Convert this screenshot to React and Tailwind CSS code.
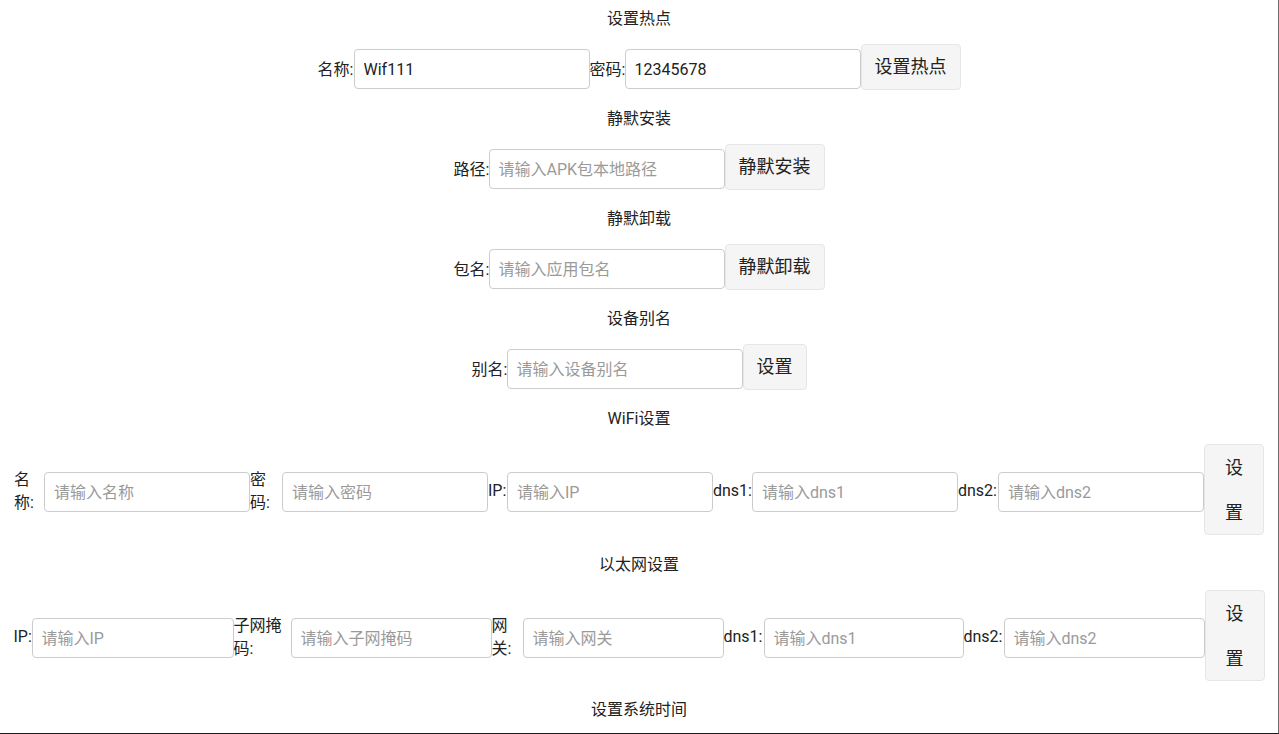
import React from "react";

const inputCls =
    "h-[40px] border border-[#cccccc] rounded-[4px] pl-[9px] pr-2 text-[16px] text-[#222] placeholder:text-[#9a9a9a] outline-none bg-white";

function Title({ children }) {
    return (
        <p className="text-[16px] leading-[23px] text-[#222] text-center">
            {children}
        </p>
    );
}

function Field({ label, labelW, inputW, placeholder, value }) {
    return (
        <div className="flex items-center mb-[1px] shrink-0">
            <span
                className={`${labelW} shrink-0 whitespace-nowrap text-[16px] leading-[23px] text-[#222]`}
            >
                {label}
            </span>
            <input
                className={`${inputCls} ${inputW} shrink-0`}
                placeholder={placeholder}
                defaultValue={value}
            />
        </div>
    );
}

function Btn({ children, w }) {
    return (
        <button
            className={`${w} shrink-0 h-[46px] leading-[44px] text-[18px] text-[#222] bg-[#f5f5f5] border border-[#e6e6e6] rounded-[4px] text-center whitespace-nowrap`}
        >
            {children}
        </button>
    );
}

function SimpleSection({ title, children }) {
    return (
        <div className="pt-[7px] pb-[10px] flex flex-col items-center">
            <Title>{title}</Title>
            <div className="mt-[14px] flex items-end justify-center">
                {children}
            </div>
        </div>
    );
}

function WideField({ label, labelW, inputW, placeholder }) {
    return (
        <>
            <span
                className={`${labelW} shrink-0 text-[16px] leading-[23px] text-[#222] mt-[2px]`}
            >
                {label}
            </span>
            <input
                className={`${inputCls} ${inputW} shrink-0 mt-[5px]`}
                placeholder={placeholder}
            />
        </>
    );
}

function TallBtn() {
    return (
        <button className="w-[60px] h-[91px] shrink-0 px-[14px] leading-[45px] text-[18px] text-[#222] bg-[#f5f5f5] border border-[#e6e6e6] rounded-[4px] text-center">
            设置
        </button>
    );
}

export default function App() {
    return (
        <div
            className="w-[1279px] h-[734px] overflow-hidden bg-white border-r border-r-[#6b6b6b] border-b border-b-[#1c1c1c]"
            style={{ fontFamily: "Roboto, 'Noto Sans CJK SC', sans-serif" }}
        >
            <SimpleSection title="设置热点">
                <Field label="名称:" labelW="w-[36px]" inputW="w-[236px]" value="Wif111" />
                <Field label="密码:" labelW="w-[35px]" inputW="w-[236px]" value="12345678" />
                <Btn w="w-[100px]">设置热点</Btn>
            </SimpleSection>

            <SimpleSection title="静默安装">
                <Field label="路径:" labelW="w-[35px]" inputW="w-[236px]" placeholder="请输入APK包本地路径" />
                <Btn w="w-[100px]">静默安装</Btn>
            </SimpleSection>

            <SimpleSection title="静默卸载">
                <Field label="包名:" labelW="w-[35px]" inputW="w-[236px]" placeholder="请输入应用包名" />
                <Btn w="w-[100px]">静默卸载</Btn>
            </SimpleSection>

            <SimpleSection title="设备别名">
                <Field label="别名:" labelW="w-[35px]" inputW="w-[236px]" placeholder="请输入设备别名" />
                <Btn w="w-[64px]">设置</Btn>
            </SimpleSection>

            {/* wifi */}
            <div className="pt-[7px] pb-[11px] flex flex-col items-center">
                <Title>WiFi设置</Title>
                <div className="mt-[14px] flex items-center justify-center w-full">
                    <WideField label="名称:" labelW="w-[30px]" inputW="w-[206px]" placeholder="请输入名称" />
                    <WideField label="密码:" labelW="w-[32px]" inputW="w-[206px]" placeholder="请输入密码" />
                    <WideField label="IP:" labelW="w-[19px] whitespace-nowrap" inputW="w-[206px]" placeholder="请输入IP" />
                    <WideField label="dns1:" labelW="w-[39px] whitespace-nowrap" inputW="w-[206px]" placeholder="请输入dns1" />
                    <WideField label="dns2:" labelW="w-[40px] whitespace-nowrap" inputW="w-[206px]" placeholder="请输入dns2" />
                    <TallBtn />
                </div>
            </div>

            {/* ethernet */}
            <div className="pt-[7px] pb-[11px] flex flex-col items-center">
                <Title>以太网设置</Title>
                <div className="mt-[14px] flex items-center justify-center w-full">
                    <WideField label="IP:" labelW="w-[18px] whitespace-nowrap" inputW="w-[202px]" placeholder="请输入IP" />
                    <WideField label="子网掩码:" labelW="w-[57px]" inputW="w-[201px]" placeholder="请输入子网掩码" />
                    <WideField label="网关:" labelW="w-[31px]" inputW="w-[201px]" placeholder="请输入网关" />
                    <WideField label="dns1:" labelW="w-[40px] whitespace-nowrap" inputW="w-[200px]" placeholder="请输入dns1" />
                    <WideField label="dns2:" labelW="w-[40px] whitespace-nowrap" inputW="w-[201px]" placeholder="请输入dns2" />
                    <TallBtn />
                </div>
            </div>

            <div className="pt-[6px] flex flex-col items-center">
                <Title>设置系统时间</Title>
            </div>
        </div>
    );
}
